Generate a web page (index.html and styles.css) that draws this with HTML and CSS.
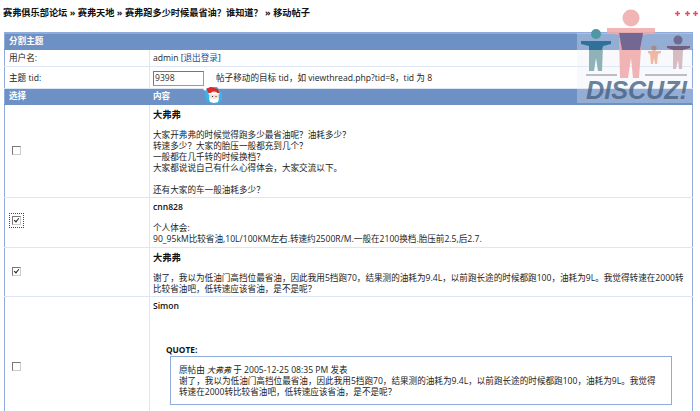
FILE: index.html
```html
<!DOCTYPE html>
<html lang="zh">
<head>
<meta charset="utf-8">
<title>移动帖子</title>
<link rel="stylesheet" href="styles.css">
</head>
<body>
<div class="page">
  <nav class="crumbs">赛弗俱乐部论坛 » 赛弗天地 » 赛弗跑多少时候最省油？谁知道？ » 移动帖子</nav>
  <table class="board">
    <colgroup><col class="col-a"><col></colgroup>
    <tr class="head h-title"><td colspan="2">分割主题</td></tr>
    <tr class="r-user"><td>用户名:</td><td>admin [<a href="#">退出登录</a>]</td></tr>
    <tr class="r-tid"><td>主题 tid:</td><td><input class="tid" type="text" value="9398"><span class="hint">帖子移动的目标 tid，如 viewthread.php?tid=8，tid 为 8</span></td></tr>
    <tr class="head h-cols"><td>选择</td><td>内容</td></tr>
    <tr class="r-1">
      <td class="pick"><input class="cb" type="checkbox"></td>
      <td><b>大弗弗</b><p>大家开弗弗的时候觉得跑多少最省油呢？油耗多少？<br>转速多少？大家的胎压一般都充到几个？<br>一般都在几千转的时候换档？<br>大家都说说自己有什么心得体会，大家交流以下。</p><p>还有大家的车一般油耗多少？</p></td>
    </tr>
    <tr class="r-2">
      <td class="pick"><span class="focus"><input class="cb" type="checkbox" checked></span></td>
      <td><b class="en">cnn828</b><p>个人体会:<br>90_95kM比较省油,10L/100KM左右.转速约2500R/M.一般在2100换档.胎压前2.5,后2.7.</p></td>
    </tr>
    <tr class="r-3">
      <td class="pick"><input class="cb" type="checkbox" checked></td>
      <td><b>大弗弗</b><p>谢了，我以为低油门高挡位最省油，因此我用5挡跑70，结果测的油耗为9.4L，以前跑长途的时候都跑100，油耗为9L。我觉得转速在2000转<br>比较省油吧，低转速应该省油，是不是呢？</p></td>
    </tr>
    <tr class="r-4">
      <td class="pick"><input class="cb" type="checkbox"></td>
      <td><b class="en">Simon</b>
        <div class="quote-label">QUOTE:</div>
        <div class="quote">原帖由 <i>大弗弗</i> 于 2005-12-25 08:35 PM 发表<br>谢了，我以为低油门高挡位最省油，因此我用5挡跑70，结果测的油耗为9.4L，以前跑长途的时候都跑100，油耗为9L。我觉得<br>转速在2000转比较省油吧，低转速应该省油，是不是呢？</div>
      </td>
    </tr>
  </table>

  <svg class="logo" viewBox="0 0 160 110" width="160" height="110" aria-hidden="true">
    <rect x="37" y="33" width="115" height="70" fill="#e6ecf6" fill-opacity=".32"/>
    <g fill="#f0a8a8" fill-opacity=".85">
      <circle cx="91" cy="18" r="8.500"/>
      <path d="M67 28H115V33L102 35 99 78H93L91 58 88 78H80L79 35 67 33Z"/>
    </g>
    <path d="M79 33H103L100 50H82Z" fill="#5f5c8e" fill-opacity=".85"/>
    <circle cx="56" cy="34" r="5" fill="#4d98a4"/>
    <path d="M41 41H71V44L63 46 62 71H58L56 58 54 71H49L49 46 41 44Z" fill="#8fb2b8"/>
    <path d="M41 41H71V44L63 46 62 50H49L49 46 41 44Z" fill="#2f7199"/>
    <circle cx="114" cy="48" r="2.600" fill="#a88"/>
    <path d="M108 51H121V53L118 54 117 64H115L114 58 113 64H111L110 54 108 53Z" fill="#f0b8a0"/>
    <circle cx="138" cy="40" r="4.500" fill="#6f6a90"/>
    <path d="M127 46H150V48L143 50 142 69H139L138 60 136 69H133L133 50 127 48Z" fill="#d6bcc0"/>
    <path d="M127 46H150V48L143 50H133L127 48Z" fill="#6f5f80"/>
    <path d="M46 75H77M105 75H147" stroke="#aaa" stroke-width="1.500"/>
    <text class="logo-word" x="46" y="99" textLength="102" lengthAdjust="spacingAndGlyphs">DISCUZ!</text>
    <path d="M135 13.500h5M137.500 11v5M145 13.500h5M147.500 11v5M153 13.500h5M155.500 11v5" stroke="#f2485a" stroke-width="1.500"/>
  </svg>

  <svg class="santa" viewBox="0 0 20 18" width="20" height="18" aria-hidden="true">
    <path d="M2 5 7 1h7l5 6v7l-4 3.500H8L3 14Z" fill="#39b6e8"/>
    <path d="M2 3l6-2 7 2 2 5H6L4 4Z" fill="#d92b2b"/>
    <circle cx="2" cy="3" r="1.600" fill="#fff"/>
    <circle cx="11" cy="10.500" r="5" fill="#f7ddd2"/>
    <path d="M6 12c2 1 8 1 10 0l-1 4-4 1-4-1Z" fill="#fff"/>
    <path d="M5.500 7h11v1.500h-11Z" fill="#fff"/>
    <circle cx="9.500" cy="10.500" r=".6" fill="#223"/><circle cx="13" cy="10.500" r=".6" fill="#223"/>
  </svg>
</div>
</body>
</html>
```
FILE: styles.css
```css
html, body { margin: 0; padding: 0; background: #fff; height: 411px; overflow: hidden; }
body { font: 8.600px/11px "Open Sans", "Noto Sans CJK SC", sans-serif; color: #222; }
.page { position: relative; width: 700px; height: 411px; overflow: hidden; }
.crumbs { height: 32px; box-sizing: border-box; padding: 7px 0 0 3px; font-size: 9.200px; line-height: 11px; font-weight: 700; color: #111; white-space: nowrap; }
.board { width: 689px; margin-left: 4px; border-collapse: collapse; table-layout: fixed; border: 1px solid #8fabdc; border-top: 2px solid #8fabdc; }
.col-a { width: 145px; }
.board td { border: 1px solid #dde6f6; padding: 0 3px; vertical-align: top; }
.board td:first-child { border-left: 0; padding-left: 4px; }
.board td:last-child { border-right: 0; }
.board b { display: block; font-size: 9.300px; color: #111; }
.board b.en { font-size: 8.600px; font-weight: 600; }
.board p { margin: 10px 0 0; }
.board p + p { margin-top: 11px; }
.head td { background: #6d90c5; color: #fff; font-weight: 700; vertical-align: middle; border-color: #6d90c5; }
.h-title { height: 16px; }
.h-cols { height: 16px; }
.r-user { height: 17px; }
.r-user td, .r-tid td { vertical-align: middle; padding-top: 2px; }
.r-tid { height: 22px; }
.r-1 { height: 93px; }
.r-2 { height: 50px; }
.r-3 { height: 49px; }
.r-4 { height: 140px; }
.r-1 td, .r-2 td, .r-3 td, .r-4 td { padding-top: 4px; }
.r-1 td.pick, .r-2 td.pick, .r-3 td.pick, .r-4 td.pick { vertical-align: middle; padding: 0 0 0 7px; }
.board a { color: #1d4e96; text-decoration: none; }
.tid { box-sizing: border-box; width: 51px; height: 15px; margin: 0 12px 0 0; padding: 0 1px; border: 1px solid #999; border-top-color: #777; border-left-color: #777; font: 8.600px "Open Sans", sans-serif; color: #333; vertical-align: middle; background: #fff; }
.hint { vertical-align: middle; }
.cb { appearance: none; position: relative; display: block; box-sizing: border-box; width: 9px; height: 9px; margin: 0; background: #fff; border: 1px solid #777; border-right-color: #ccc; border-bottom-color: #ccc; }
.cb:checked::after { content: ""; position: absolute; left: 2px; top: 0; width: 2px; height: 4px; border: solid #222; border-width: 0 1.500px 1.500px 0; transform: rotate(40deg); }
.focus { display: inline-block; margin-left: -3px; padding: 2px; border: 1px dotted #444; }
.quote-label { margin: 32px 0 0 13px; font-size: 8.300px; font-weight: 700; color: #111; }
.quote { box-sizing: border-box; width: 502px; margin: 1px 0 0 17px; padding: 7px 7px 6px 8px; border: 1px solid #8fabdc; }
.quote i { font-size: 8px; }
.logo { position: absolute; left: 540px; top: 0; }
.logo-word { font: italic 700 25px "Liberation Sans", sans-serif; fill: #46607f; fill-opacity: .8; }
.santa { position: absolute; left: 203px; top: 86px; }
```
